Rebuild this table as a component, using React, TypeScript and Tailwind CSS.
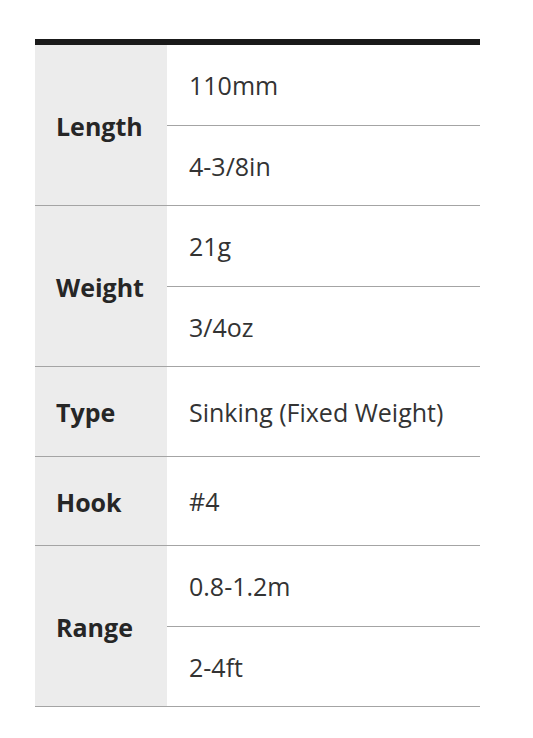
import React from "react";

type Group = { label: string; values: string[] };

const groups: Group[] = [
  { label: "Length", values: ["110mm", "4-3/8in"] },
  { label: "Weight", values: ["21g", "3/4oz"] },
  { label: "Type", values: ["Sinking (Fixed Weight)"] },
  { label: "Hook", values: ["#4"] },
  { label: "Range", values: ["0.8-1.2m", "2-4ft"] },
];

export default function App() {
  return (
    <div
      className="w-[533px] h-[738px] bg-white pt-[39px] pl-[35px]"
      style={{ fontFamily: '"Open Sans", sans-serif' }}
    >
      <div className="w-[445px] border-t-[6px] border-[#1a1a1a]">
        {groups.map((g, gi) => (
          <div key={g.label} className="flex border-b border-[#a4a4a4]">
            <div className="w-[132px] shrink-0 bg-[#ececec] flex items-center pl-[21px] pt-[3px] text-[25px] font-bold text-[#262626]">
              {g.label}
            </div>
            <div className="flex-1 flex flex-col">
              {g.values.length === 1 ? (
                <div
                  className={`${gi === 2 ? "h-[89px]" : "h-[88px]"} flex items-center pl-[22px] pt-[2px] text-[25px] text-[#333]`}
                >
                  {g.values[0]}
                </div>
              ) : (
                <>
                  <div className="h-[81px] border-b border-[#a4a4a4] flex items-center pl-[22px] pt-[2px] text-[25px] text-[#333]">
                    {g.values[0]}
                  </div>
                  <div className="h-[79px] flex items-center pl-[22px] pt-[2px] text-[25px] text-[#333]">
                    {g.values[1]}
                  </div>
                </>
              )}
            </div>
          </div>
        ))}
      </div>
    </div>
  );
}
